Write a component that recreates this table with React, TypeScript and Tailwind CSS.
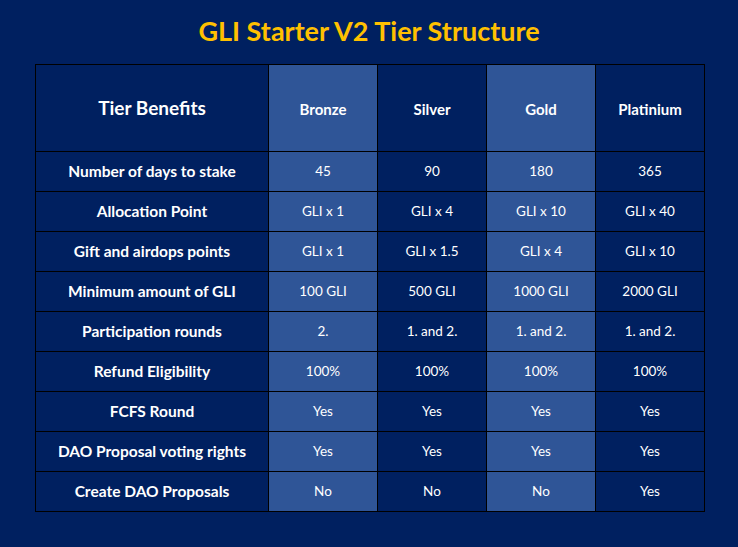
const tiers = ["Bronze", "Silver", "Gold", "Platinium"];

const rows: Array<{ label: string; values: string[] }> = [
  { label: "Number of days to stake", values: ["45", "90", "180", "365"] },
  { label: "Allocation Point", values: ["GLI x 1", "GLI x 4", "GLI x 10", "GLI x 40"] },
  { label: "Gift and airdops points", values: ["GLI x 1", "GLI x 1.5", "GLI x 4", "GLI x 10"] },
  { label: "Minimum amount of GLI", values: ["100 GLI", "500 GLI", "1000 GLI", "2000 GLI"] },
  { label: "Participation rounds", values: ["2.", "1. and 2.", "1. and 2.", "1. and 2."] },
  { label: "Refund Eligibility", values: ["100%", "100%", "100%", "100%"] },
  { label: "FCFS Round", values: ["Yes", "Yes", "Yes", "Yes"] },
  { label: "DAO Proposal voting rights", values: ["Yes", "Yes", "Yes", "Yes"] },
  { label: "Create DAO Proposals", values: ["No", "No", "No", "Yes"] },
];

function cellBg(i: number) {
  return i % 2 === 0 ? "bg-[#2f5597]" : "bg-[#002060]";
}

export default function App() {
  return (
    <div
      className="w-[738px] h-[547px] bg-[#002060] text-white flex flex-col items-center"
      style={{ fontFamily: "Lato, 'Noto Sans', sans-serif" }}
    >
      <h1 className="mt-[12px] h-[38px] leading-[38px] text-[27px] font-bold text-[#ffc000]">
        GLI Starter V2 Tier Structure
      </h1>
      <div className="mt-[14px] ml-[2px] grid grid-cols-[232px_108px_108px_108px_108px] grid-rows-[86px_repeat(9,39px)] gap-px bg-black border border-black">
        <div className="bg-[#002060] flex items-center justify-center pt-[1px] text-[19px] font-bold">
          Tier Benefits
        </div>
        {tiers.map((t, i) => (
          <div
            key={t}
            className={`${cellBg(i)} flex items-center justify-center pt-[3px] text-[15px] font-bold`}
          >
            {t}
          </div>
        ))}
        {rows.map((row) => (
          <>
            <div
              key={row.label}
              className="bg-[#002060] flex items-center justify-center text-[15.5px] font-bold"
            >
              {row.label}
            </div>
            {row.values.map((v, i) => (
              <div
                key={row.label + i}
                className={`${cellBg(i)} flex items-center justify-center text-[13.5px]`}
              >
                {v}
              </div>
            ))}
          </>
        ))}
      </div>
    </div>
  );
}
